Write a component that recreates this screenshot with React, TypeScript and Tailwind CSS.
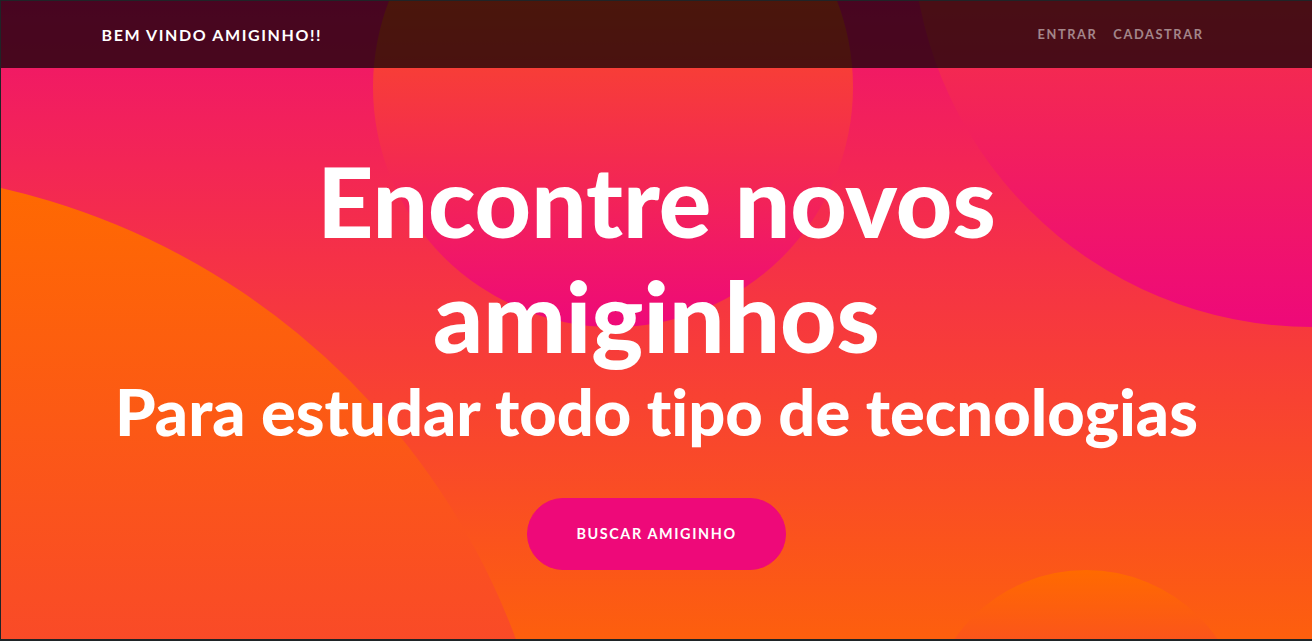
export default function App() {
  return (
    <div className="relative h-[641px] overflow-hidden border-t border-l border-b-2 border-[#1f2427] bg-[#1f2427] font-['Lato',sans-serif]">
      {/* Masthead */}
      <header className="relative -mt-[74px] overflow-hidden bg-[linear-gradient(0deg,#ff6a00_0%,#ee0979_100%)] pt-[216px] pb-[160px]">
        <div className="absolute bottom-[-880px] left-[-880px] h-[1440px] w-[1440px] rounded-full bg-[linear-gradient(0deg,#ee0979_0%,#ff6a00_100%)]" />
        <div className="absolute top-[-400px] right-[-400px] h-[800px] w-[800px] rounded-full bg-[linear-gradient(0deg,#ee0979_0%,#ff6a00_100%)]" />
        <div className="absolute bottom-[-160px] right-[5%] h-[320px] w-[320px] rounded-full bg-[linear-gradient(0deg,#ee0979_0%,#ff6a00_100%)]" />
        <div className="absolute top-[-80px] right-[35%] h-[480px] w-[480px] rounded-full bg-[linear-gradient(0deg,#ee0979_0%,#ff6a00_100%)]" />

        <div className="relative z-10 flex flex-col items-center text-center text-white [font-variant-ligatures:none]">
          <h1 className="text-[98px] leading-[115px] font-black">
            Encontre novos
            <br />
            amiginhos
          </h1>
          <h2 className="text-[65px] leading-[77px] font-black">
            Para estudar todo tipo de tecnologias
          </h2>
          <button className="mt-12 h-[72px] rounded-full border border-[#ee0979] bg-[#ee0979] px-12 text-[14.4px] font-bold uppercase tracking-[1.6px] text-white">
            Buscar amiginho
          </button>
        </div>
      </header>

      {/* Navbar */}
      <nav className="absolute inset-x-0 top-0 z-20 h-[67px] bg-black/70">
        <div className="mx-auto flex h-full w-[1140px] items-center justify-between px-[15px]">
          <span className="text-[16px] font-bold uppercase tracking-[1.6px] text-white">
            Bem vindo amiginho!!
          </span>
          <div className="flex items-center">
            <a className="px-2 text-[12.8px] font-bold uppercase tracking-[1.6px] text-white/50">
              Entrar
            </a>
            <a className="px-2 text-[12.8px] font-bold uppercase tracking-[1.6px] text-white/50">
              Cadastrar
            </a>
          </div>
        </div>
      </nav>
    </div>
  );
}
